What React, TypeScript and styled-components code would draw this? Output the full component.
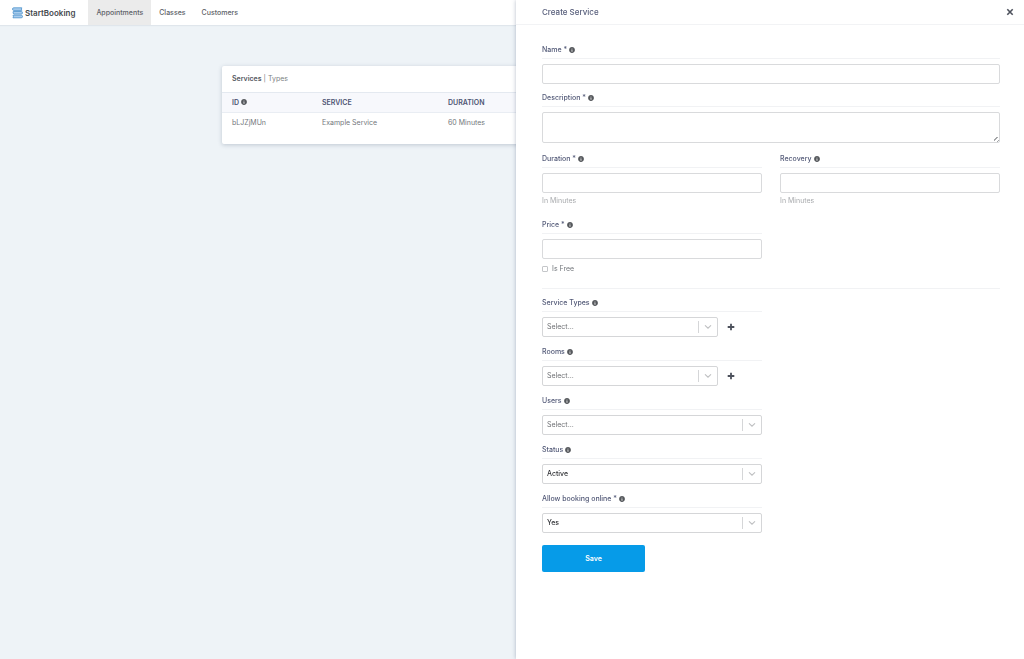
import React, { useId } from "react";
import styled, { createGlobalStyle } from "styled-components";
import { FaInfoCircle } from "react-icons/fa";

const GlobalStyle = createGlobalStyle`
  *, *::before, *::after { box-sizing: border-box; }
  body {
    margin: 0;
    min-height: 100vh;
    background: #eef3f7;
    color: #73777c;
    font-family: Inter, "Open Sans", sans-serif;
    font-size: 7px;
    line-height: 10px;
  }
  button, input, select, textarea { font: inherit; color: inherit; }
`;

const TopBar = styled.header`
  display: flex;
  align-items: stretch;
  height: 25px;
  background: #fff;
  box-shadow: 0 1px 1px rgba(60, 80, 110, 0.08);
`;

const Brand = styled.a`
  display: flex;
  align-items: center;
  gap: 2px;
  padding: 0 13px 0 12px;
  color: #45494e;
  font-size: 8px;
  font-weight: 600;
  text-decoration: none;
`;

const NavLink = styled.a<{ $active?: boolean }>`
  display: flex;
  align-items: center;
  padding: 0 8px;
  background: ${(p) => (p.$active ? "#ebebeb" : "transparent")};
  color: #5d6268;
  font-weight: 500;
  text-decoration: none;
`;

const Main = styled.main`
  padding: 41px 24px;
`;

const Card = styled.section`
  max-width: 580px;
  margin: 0 auto;
  padding-bottom: 11px;
  background: #fff;
  border-radius: 2px;
  box-shadow: 0 1px 4px rgba(50, 70, 100, 0.25);
`;

const CardTabs = styled.nav`
  display: flex;
  gap: 2px;
  padding: 8px 10px;
`;

const CardTab = styled.a<{ $active?: boolean }>`
  color: ${(p) => (p.$active ? "#55595f" : "#7b7f84")};
  font-weight: ${(p) => (p.$active ? 600 : 400)};
  text-decoration: none;
`;

const Table = styled.table`
  width: 100%;
  border-collapse: collapse;
  table-layout: fixed;
  th, td {
    padding: 5px 10px;
    text-align: left;
  }
  th {
    padding-bottom: 4px;
    background: #f7f8fc;
    border-top: 1px solid #e4e9f0;
    border-bottom: 1px solid #e9edf3;
    color: #4e5573;
    font-weight: 600;
    text-transform: uppercase;
  }
`;

const Col = styled.col<{ $width?: number }>`
  width: ${(p) => (p.$width ? `${p.$width}px` : "auto")};
`;

const InfoIcon = styled(FaInfoCircle)`
  flex: none;
  width: 6px;
  height: 6px;
  color: #55585c;
`;

const Drawer = styled.aside`
  position: fixed;
  inset: 0 0 0 auto;
  width: 508px;
  max-width: 100%;
  overflow-y: auto;
  background: #fff;
  box-shadow: 0 0 4px rgba(50, 70, 100, 0.35);
`;

const DrawerHeader = styled.header`
  display: flex;
  align-items: center;
  justify-content: space-between;
  height: 25px;
  padding: 0 10px 0 26px;
  border-bottom: 1px solid #f2f3f5;
`;

const DrawerTitle = styled.h1`
  margin: 0;
  color: #565d7a;
  font-size: 8px;
  font-weight: 500;
`;

const IconButton = styled.button`
  display: flex;
  padding: 0;
  border: 0;
  background: none;
  color: #4d515c;
  cursor: pointer;
`;

const Form = styled.form`
  display: flex;
  flex-direction: column;
  gap: 9px;
  padding: 20px 24px 24px 26px;
`;

const Columns = styled.div`
  display: grid;
  grid-template-columns: 1fr 1fr;
  column-gap: 18px;
  row-gap: 14px;
  margin-top: 2px;
`;

const HalfStack = styled.div`
  display: flex;
  flex-direction: column;
  gap: 10px;
  width: calc(50% - 9px);
`;

const FieldBox = styled.div`
  display: flex;
  flex-direction: column;
`;

const FieldLabel = styled.label`
  display: flex;
  align-items: center;
  gap: 2px;
  height: 14px;
  margin-bottom: 5px;
  padding-bottom: 3px;
  border-bottom: 1px solid #f1f2f4;
  color: #525977;
  font-weight: 500;
`;

const TextInput = styled.input`
  width: 100%;
  height: 20px;
  padding: 0 5px;
  border: 1px solid #d9dadc;
  border-radius: 2px;
  background: #fff;
`;

const TextArea = styled.textarea`
  display: block;
  width: 100%;
  height: 31px;
  padding: 5px;
  border: 1px solid #d9dadc;
  border-radius: 2px;
  background: #fff;
  resize: vertical;
  &::-webkit-resizer {
    background: repeating-linear-gradient(135deg, transparent 0 2px, #a4a6a8 2px 3px)
      right bottom / 5px 5px no-repeat;
    clip-path: polygon(100% 0, 100% 100%, 0 100%);
  }
`;

const Hint = styled.small`
  margin-top: 3px;
  color: #a9abae;
  font-size: 7px;
`;

const CheckLabel = styled.label`
  display: flex;
  align-items: center;
  gap: 4px;
  margin-top: 5px;
`;

const CheckBox = styled.input`
  appearance: none;
  width: 6px;
  height: 6px;
  margin: 0;
  border: 1px solid #c4c6c9;
  border-radius: 1px;
  &:checked {
    background: #069be8;
  }
`;

const Divider = styled.hr`
  width: 100%;
  height: 1px;
  margin: 5px 0 0;
  border: 0;
  background: #f1f2f4;
`;

const SelectRow = styled.div`
  display: grid;
  grid-template-columns: 1fr auto;
  align-items: center;
`;

const SelectShell = styled.div`
  display: grid;
  grid-template-columns: 1fr 20px;
  align-items: center;
`;

const Select = styled.select<{ $empty?: boolean }>`
  grid-area: 1 / 1 / 2 / 3;
  appearance: none;
  width: 100%;
  height: 20px;
  padding: 0 24px 0 4px;
  border: 1px solid #d5d6d8;
  border-radius: 2px;
  background: #fff;
  color: ${(p) => (p.$empty ? "#6e7074" : "#303236")};
  font-weight: ${(p) => (p.$empty ? 400 : 500)};
`;

const Arrow = styled.span`
  grid-area: 1 / 2 / 2 / 3;
  display: flex;
  align-items: center;
  justify-content: center;
  height: 12px;
  padding-right: 1px;
  border-left: 1px solid #d5d6d8;
  pointer-events: none;
`;

const AddButton = styled(IconButton)`
  width: 44px;
  padding-left: 9px;
`;

const SaveButton = styled.button`
  width: 103px;
  height: 27px;
  margin-top: 2px;
  border: 0;
  border-radius: 2px;
  background: #069be8;
  color: #fff;
  font-weight: 600;
  cursor: pointer;
`;

function Logo() {
  return (
    <svg width="11" height="12" viewBox="0 0 11 12" aria-hidden="true">
      <g fill="#a9cdee" stroke="#4a90cc" strokeWidth="0.8" strokeLinejoin="round">
        <path d="M1.800 .8H9.800Q9 2.100 9.800 3.400H1.800A1.300 1.300 0 0 1 1.800 .8Z" />
        <path d="M1.200 4.500H9.200A1.300 1.300 0 0 1 9.200 7.100H1.800Q.6 6.200 1.200 4.500Z" />
        <path d="M1 8.200H9.200A1.300 1.300 0 0 1 9.200 10.800H1Q1.800 9.500 1 8.200Z" />
      </g>
    </svg>
  );
}

function CloseIcon() {
  return (
    <svg width="8" height="8" viewBox="0 0 8 8" aria-hidden="true">
      <path d="M1.300 1.300L6.700 6.700M6.700 1.300L1.300 6.700" stroke="currentColor" strokeWidth="1.600" />
    </svg>
  );
}

function PlusIcon() {
  return (
    <svg width="8" height="8" viewBox="0 0 8 8" aria-hidden="true">
      <path d="M4 .7V7.300M.7 4H7.300" stroke="currentColor" strokeWidth="1.800" />
    </svg>
  );
}

type FieldProps = {
  label: string;
  children: (id: string) => React.ReactNode;
};

function Field({ label, children }: FieldProps) {
  const id = useId();
  return (
    <FieldBox>
      <FieldLabel htmlFor={id}>
        {label} <InfoIcon />
      </FieldLabel>
      {children(id)}
    </FieldBox>
  );
}

type SelectFieldProps = {
  label: string;
  options: string[];
  placeholder?: boolean;
  addLabel?: string;
};

function SelectField({ label, options, placeholder, addLabel }: SelectFieldProps) {
  return (
    <Field label={label}>
      {(id) => (
        <SelectRow>
          <SelectShell>
            <Select id={id} $empty={placeholder}>
              {options.map((option) => (
                <option key={option}>{option}</option>
              ))}
            </Select>
            <Arrow>
              <svg width="8" height="6" viewBox="0 0 8 6" aria-hidden="true">
                <path d="M1.300 1.700L4 4.200L6.700 1.700" fill="none" stroke="#bfc0c2" strokeWidth="1.100" strokeLinecap="round" />
              </svg>
            </Arrow>
          </SelectShell>
          {addLabel && (
            <AddButton type="button" aria-label={addLabel}>
              <PlusIcon />
            </AddButton>
          )}
        </SelectRow>
      )}
    </Field>
  );
}

export default function App() {
  return (
    <>
      <GlobalStyle />
      <TopBar>
        <Brand href="#">
          <Logo />
          StartBooking
        </Brand>
        <NavLink href="#appointments" $active>Appointments</NavLink>
        <NavLink href="#classes">Classes</NavLink>
        <NavLink href="#customers">Customers</NavLink>
      </TopBar>
      <Main>
        <Card>
          <CardTabs>
            <CardTab href="#services" $active>Services</CardTab>
            <span>|</span>
            <CardTab href="#types">Types</CardTab>
          </CardTabs>
          <Table>
            <colgroup>
              <Col $width={90} />
              <Col $width={126} />
              <Col />
            </colgroup>
            <thead>
              <tr>
                <th>ID <InfoIcon /></th>
                <th>Service</th>
                <th>Duration</th>
              </tr>
            </thead>
            <tbody>
              <tr>
                <td>bLJZjMUn</td>
                <td>Example Service</td>
                <td>60 Minutes</td>
              </tr>
            </tbody>
          </Table>
        </Card>
      </Main>
      <Drawer>
        <DrawerHeader>
          <DrawerTitle>Create Service</DrawerTitle>
          <IconButton type="button" aria-label="Close">
            <CloseIcon />
          </IconButton>
        </DrawerHeader>
        <Form>
          <Field label="Name *">{(id) => <TextInput id={id} />}</Field>
          <Field label="Description *">{(id) => <TextArea id={id} />}</Field>
          <Columns>
            <Field label="Duration *">
              {(id) => (
                <>
                  <TextInput id={id} />
                  <Hint>In Minutes</Hint>
                </>
              )}
            </Field>
            <Field label="Recovery">
              {(id) => (
                <>
                  <TextInput id={id} />
                  <Hint>In Minutes</Hint>
                </>
              )}
            </Field>
            <Field label="Price *">
              {(id) => (
                <>
                  <TextInput id={id} />
                  <CheckLabel>
                    <CheckBox type="checkbox" />
                    Is Free
                  </CheckLabel>
                </>
              )}
            </Field>
          </Columns>
          <Divider />
          <HalfStack>
            <SelectField label="Service Types" options={["Select..."]} placeholder addLabel="Add service type" />
            <SelectField label="Rooms" options={["Select..."]} placeholder addLabel="Add room" />
            <SelectField label="Users" options={["Select..."]} placeholder />
            <SelectField label="Status" options={["Active", "Inactive"]} />
            <SelectField label="Allow booking online *" options={["Yes", "No"]} />
            <SaveButton type="submit">Save</SaveButton>
          </HalfStack>
        </Form>
      </Drawer>
    </>
  );
}
